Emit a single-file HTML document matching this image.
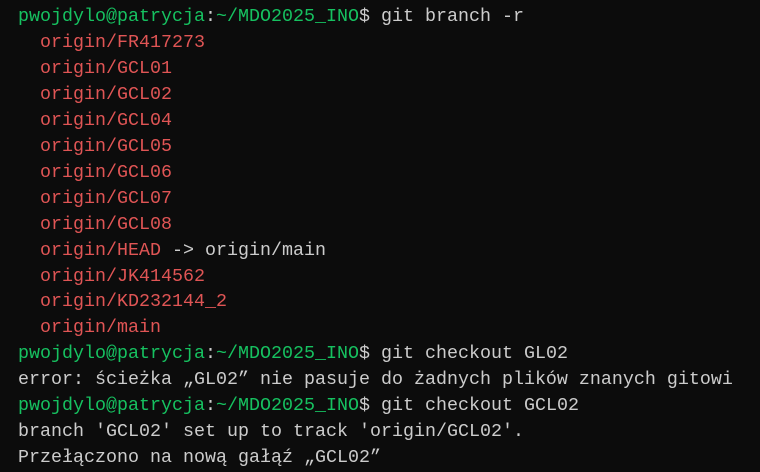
<!DOCTYPE html>
<html><head><meta charset="utf-8"><style>
html,body{margin:0;padding:0;background:#0c0c0c;width:760px;height:472px;overflow:hidden}
pre{margin:0;position:absolute;left:18px;top:4px;font-family:"Liberation Mono",monospace;font-size:18.33px;line-height:25.95px;color:#cccccc;white-space:pre}
.g{color:#16c160}.r{color:#e05555}
</style></head><body><pre><span class="g">pwojdylo@patrycja</span>:<span class="g">~/MDO2025_INO</span>$ git branch -r
  <span class="r">origin/FR417273</span>
  <span class="r">origin/GCL01</span>
  <span class="r">origin/GCL02</span>
  <span class="r">origin/GCL04</span>
  <span class="r">origin/GCL05</span>
  <span class="r">origin/GCL06</span>
  <span class="r">origin/GCL07</span>
  <span class="r">origin/GCL08</span>
  <span class="r">origin/HEAD</span> -&gt; origin/main
  <span class="r">origin/JK414562</span>
  <span class="r">origin/KD232144_2</span>
  <span class="r">origin/main</span>
<span class="g">pwojdylo@patrycja</span>:<span class="g">~/MDO2025_INO</span>$ git checkout GL02
error: ścieżka „GL02” nie pasuje do żadnych plików znanych gitowi
<span class="g">pwojdylo@patrycja</span>:<span class="g">~/MDO2025_INO</span>$ git checkout GCL02
branch 'GCL02' set up to track 'origin/GCL02'.
Przełączono na nową gałąź „GCL02”</pre></body></html>
